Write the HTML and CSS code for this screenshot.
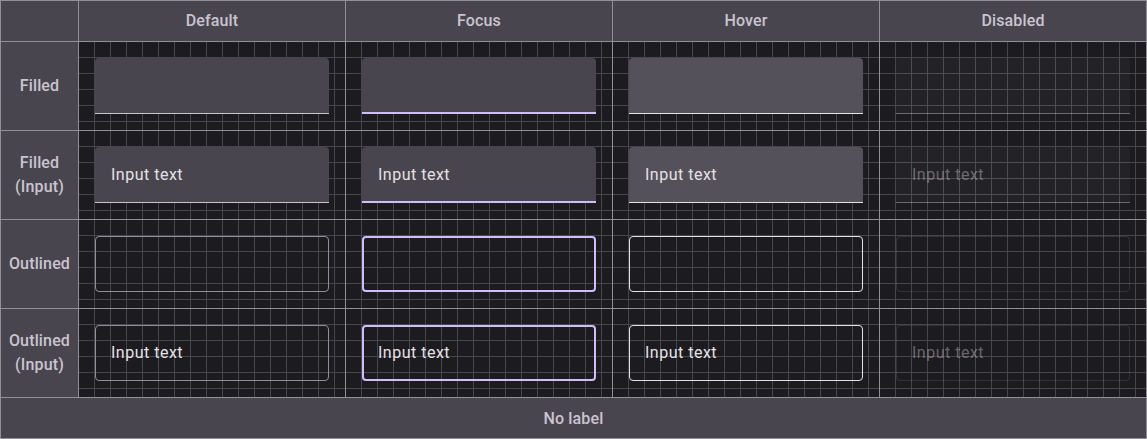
FILE: index.html
```html
<!DOCTYPE html>
<html lang="en">
<head>
    <meta charset="UTF-8">
    <meta name="viewport" content="width=device-width, initial-scale=1.0">
    <title>Text field states</title>
    <link rel="stylesheet" href="styles.css">
</head>
<body>
    <div class="sheet">
        <div class="head"></div>
        <div class="head">Default</div>
        <div class="head">Focus</div>
        <div class="head">Hover</div>
        <div class="head">Disabled</div>

        <div class="label">Filled</div>
        <div class="cell"><div class="field filled"></div></div>
        <div class="cell"><div class="field filled focus"></div></div>
        <div class="cell"><div class="field filled hover"></div></div>
        <div class="cell"><div class="field filled disabled"></div></div>

        <div class="label">Filled<br>(Input)</div>
        <div class="cell"><div class="field filled">Input text</div></div>
        <div class="cell"><div class="field filled focus">Input text</div></div>
        <div class="cell"><div class="field filled hover">Input text</div></div>
        <div class="cell"><div class="field filled disabled">Input text</div></div>

        <div class="label">Outlined</div>
        <div class="cell"><div class="field outlined"></div></div>
        <div class="cell"><div class="field outlined focus"></div></div>
        <div class="cell"><div class="field outlined hover"></div></div>
        <div class="cell"><div class="field outlined disabled"></div></div>

        <div class="label">Outlined<br>(Input)</div>
        <div class="cell"><div class="field outlined">Input text</div></div>
        <div class="cell"><div class="field outlined focus">Input text</div></div>
        <div class="cell"><div class="field outlined hover">Input text</div></div>
        <div class="cell"><div class="field outlined disabled">Input text</div></div>

        <div class="footer">No label</div>
    </div>
</body>
</html>
```

FILE: styles.css
```css
body {
    margin: 0;
    font-family: Roboto, 'Noto Sans', sans-serif;
    background-color: #1c1b1f;
}
.sheet {
    display: grid;
    grid-template-columns: 77px repeat(4, 266px);
    grid-template-rows: 40px repeat(4, 88px) 40px;
    gap: 1px;
    padding: 1px;
    background-color: #938f99;
    width: 1145px;
}
.head, .label, .footer {
    background-color: #49454f;
    color: #cac4d0;
    font-size: 16px;
    font-weight: 500;
    letter-spacing: 0.15px;
    display: flex;
    align-items: center;
    justify-content: center;
    text-align: center;
}
.head {
    padding-bottom: 1px;
}
.label {
    line-height: 24px;
}
.footer {
    grid-column: 1 / -1;
}
.cell {
    background-color: #1c1b1f;
    background-image:
        linear-gradient(to right, #49454f 1px, transparent 1px),
        linear-gradient(to bottom, #49454f 1px, transparent 1px);
    background-size: 16px 16px;
    background-position: -1px -1px;
    padding: 16px;
}
.field {
    height: 56px;
    box-sizing: border-box;
    display: flex;
    align-items: center;
    padding: 0 16px;
    font-size: 16px;
    letter-spacing: 0.5px;
    color: #e6e1e5;
}
.filled {
    background-color: #49454f;
    border-radius: 4px 4px 0 0;
    border-bottom: 1px solid #cac4d0;
}
.filled.focus {
    border-bottom: 2px solid #d0bcff;
    padding-top: 1px;
}
.filled.hover {
    background-color: #55515b;
    border-bottom-color: #e6e1e5;
}
.filled.disabled {
    background-color: rgba(230, 225, 229, 0.04);
    border-bottom-color: rgba(230, 225, 229, 0.38);
    color: rgba(230, 225, 229, 0.38);
}
.outlined {
    border: 1px solid #938f99;
    border-radius: 4px;
    padding: 0 15px 1px;
}
.outlined.focus {
    border: 2px solid #d0bcff;
    padding: 0 14px 2px;
}
.outlined.hover {
    border-color: #e6e1e5;
}
.outlined.disabled {
    border-color: rgba(230, 225, 229, 0.12);
    color: rgba(230, 225, 229, 0.38);
}
```
